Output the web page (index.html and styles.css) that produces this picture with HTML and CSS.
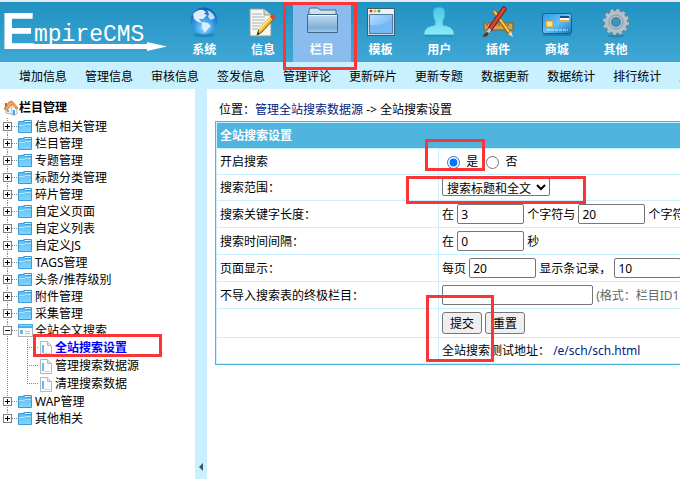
FILE: index.html
```html
<!DOCTYPE html>
<html lang="zh-CN">
<head>
<meta charset="utf-8">
<title>EmpireCMS</title>
<link rel="stylesheet" href="styles.css">
</head>
<body>
<svg class="defs" aria-hidden="true">
  <defs>
    <linearGradient id="gFolder" x1="0" y1="0" x2="0" y2="1"><stop offset="0" stop-color="#5cbcf0"/><stop offset="1" stop-color="#7ed6ff"/></linearGradient>
    <linearGradient id="gBig" x1="0" y1="0" x2="0" y2="1"><stop offset="0" stop-color="#c3dcf2"/><stop offset=".75" stop-color="#80aed8"/><stop offset="1" stop-color="#a8cdee"/></linearGradient>
    <radialGradient id="gGlobe" cx=".5" cy=".75" r=".7"><stop offset="0" stop-color="#8fdcff"/><stop offset=".5" stop-color="#3d9be8"/><stop offset="1" stop-color="#1560b4"/></radialGradient>
    <linearGradient id="gUser" x1="0" y1="0" x2="0" y2="1"><stop offset="0" stop-color="#48c4e4"/><stop offset="1" stop-color="#90ecf8"/></linearGradient>
    <linearGradient id="gWin" x1="0" y1="0" x2="1" y2="1"><stop offset="0" stop-color="#b8dcff"/><stop offset=".5" stop-color="#8cc4fa"/><stop offset="1" stop-color="#5aa4f0"/></linearGradient>
    <linearGradient id="gCard" x1="0" y1="0" x2="1" y2="1"><stop offset="0" stop-color="#2c98e4"/><stop offset=".5" stop-color="#66c0f4"/><stop offset="1" stop-color="#1674c4"/></linearGradient>
  </defs>
  <symbol id="node" viewBox="0 0 18 17">
    <path d="M7.500 0V17" stroke="#888" stroke-dasharray="1 1"/><path d="M12 8.500H18" stroke="#888" stroke-dasharray="1 1"/>
    <rect x="3.500" y="4.500" width="8" height="8" fill="#fff" stroke="#808080"/><path d="M5 8.500H10M7.500 6V11" stroke="#000"/>
  </symbol>
  <symbol id="node-open" viewBox="0 0 18 17">
    <path d="M7.500 0V17" stroke="#888" stroke-dasharray="1 1"/><path d="M12 8.500H18" stroke="#888" stroke-dasharray="1 1"/>
    <rect x="3.500" y="4.500" width="8" height="8" fill="#fff" stroke="#808080"/><path d="M5 8.500H10" stroke="#000"/>
  </symbol>
  <symbol id="node-last" viewBox="0 0 18 17">
    <path d="M7.500 0V8" stroke="#888" stroke-dasharray="1 1"/><path d="M12 8.500H18" stroke="#888" stroke-dasharray="1 1"/>
    <rect x="3.500" y="4.500" width="8" height="8" fill="#fff" stroke="#808080"/><path d="M5 8.500H10M7.500 6V11" stroke="#000"/>
  </symbol>
  <symbol id="branch" viewBox="0 0 39 18">
    <path d="M7.500 0V18M27.500 0V18M29 8.500H39" stroke="#888" stroke-dasharray="1 1"/>
  </symbol>
  <symbol id="branch-last" viewBox="0 0 39 18">
    <path d="M7.500 0V18M27.500 0V9M29 8.500H39" stroke="#888" stroke-dasharray="1 1"/>
  </symbol>
  <symbol id="folder" viewBox="0 0 15 13">
    <path d="M5.500 .5H13.500V3" fill="#c4ecff" stroke="#3898d4"/>
    <path d="M.5 12.500V1.500H6L7.500 2.500H13.500V12.500Z" fill="url(#gFolder)" stroke="#3a9cd8"/>
    <path d="M1 5.500H6L7.500 4.500H13" fill="none" stroke="#b0e4ff"/>
  </symbol>
  <symbol id="panel" viewBox="0 0 15 13">
    <rect x=".5" y=".5" width="14" height="12" fill="#f6fafc" stroke="#a8b4ba"/><path d="M0 0H15V4H0Z" fill="#46b0e8"/><path d="M1 1.500H14" stroke="#8cd4f8"/>
    <path d="M2 6H5V10H2Z" fill="#68b8e6"/><path d="M7 7.500H12M7 9.500H12" stroke="#b8c4ca"/>
  </symbol>
  <symbol id="page" viewBox="0 0 12 15">
    <path d="M.5 .5H7.500L11.500 4.500V14.500H.5Z" fill="#fbfcfd" stroke="#b0b8be"/><path d="M7.500 .5V4.500H11.500" fill="#dde4e8" stroke="#b0b8be"/><path d="M2 4H4V12H2Z" fill="#6cbae6"/><path d="M4 12.500H10" stroke="#c8d8e0"/>
  </symbol>
</svg>

<div class="page">
  <header class="top">
    <a class="logo" href="#" aria-label="EmpireCMS">
      <span class="logo-e">E</span><span class="logo-rest">mpireCMS</span>
      <svg class="logo-arrow" viewBox="0 0 162 9" aria-hidden="true"><path d="M0 2H142V0L162 4.500 142 9V7H0Z" fill="#fff"/></svg>
    </a>
    <nav class="mainnav">
      <a href="#"><svg viewBox="0 0 32 32"><ellipse cx="16" cy="29" rx="10" ry="2" fill="#176c9c" opacity=".5"/><circle cx="16" cy="15" r="13.500" fill="url(#gGlobe)"/><path d="M5 8Q10 3 15 4L18 6 16 8 19 9 15 13 11 13 14 17 10 16 6 13Z" fill="#eef8ff" opacity=".9"/><path d="M19 4Q25 6 27 12L23 14 20 11 21 8Z" fill="#d4efff" opacity=".85"/><path d="M14 16L20 17 23 20 19 24 17 27 14 22Z" fill="#e4f6ff" opacity=".9"/></svg>系统</a>
      <a href="#"><svg viewBox="0 0 32 32"><path d="M3 3H17L24 9V30H3Z" fill="#f6f7f4" stroke="#929894"/><path d="M17 3V9H24" fill="#d7dad7" stroke="#929894"/><path d="M5 8H15M5 11H18M5 14H18M5 17H16M5 20H13M5 23H11" stroke="#a9b1b5"/><path d="M10 29L12 23 24 10 27 13 15 26Z" fill="#f4b42c" stroke="#6b5318"/><path d="M12 24L24 11" stroke="#ffe370" stroke-width="2"/><path d="M23 11L26 14 29 11 26 8Z" fill="#df4335"/><path d="M10 29L11 26 13 28Z" fill="#222"/></svg>信息</a>
      <a class="active" href="#"><svg class="wide" viewBox="0 0 34 32"><path d="M4 8V4Q4 2 6 2H13L15 4H31V9" fill="#d0e2f2" stroke="#476886"/><path d="M2.500 8.500H32.500V26.500H2.500Z" fill="url(#gBig)" stroke="#416688"/><path d="M3 9.500H32" stroke="#e9f5ff"/></svg>栏目</a>
      <a href="#"><svg viewBox="0 0 32 32"><path d="M2.500 2.500H29.500V29.500H2.500Z" fill="#cbd9e3" stroke="#405d73"/><path d="M3 3H29V8H3Z" fill="#edf2f5"/><circle cx="6" cy="5" r="1.500" fill="#e63425"/><circle cx="10" cy="5" r="1.500" fill="#eab51e"/><circle cx="14" cy="5" r="1.500" fill="#40aa35"/><path d="M4.500 8.500H27.500V27.500H4.500Z" fill="url(#gWin)" stroke="#4d7ea5"/><path d="M5 19Q15 20 27 14V27H5Z" fill="#75b8f6"/></svg>模板</a>
      <a href="#"><svg viewBox="0 0 32 32"><path d="M1 29V26Q3 20 12 19V15Q10 12 10 7Q10 1 16 1T22 7Q22 12 20 15V19Q29 20 31 26V29Z" fill="url(#gUser)" stroke="#2fa9c9"/><path d="M2 30H30" stroke="#1c7095" opacity=".6"/></svg>用户</a>
      <a href="#"><svg viewBox="0 0 32 32"><path d="M2 17H31V24H2Z" fill="#d3a256" stroke="#875b20"/><path d="M5 18V20M8 18V20M11 18V20M14 18V20M17 18V20M20 18V20M23 18V20M26 18V20" stroke="#6c4818"/><path d="M12 5L28 28" stroke="#a46a12" stroke-width="4"/><path d="M12 5L27 26" stroke="#f6cf48" stroke-width="2"/><path d="M26 28L31 31 29 25Z" fill="#f0dbb8"/><path d="M22 3L8 23" stroke="#7f1e18" stroke-width="5" stroke-linecap="round"/><path d="M22 3L8 23" stroke="#d84438" stroke-width="3" stroke-linecap="round"/><path d="M8 23L5 28" stroke="#c8cbd0" stroke-width="3"/><path d="M5 26Q1 28 1 31Q6 31 7 27Z" fill="#5a351c"/></svg>插件</a>
      <a href="#"><svg viewBox="0 0 32 32"><rect x="1.500" y="7.500" width="29" height="20" rx="2" fill="url(#gCard)" stroke="#135e9e"/><path d="M2 29H30" stroke="#17618f"/><rect x="5" y="15" width="7" height="6" fill="#f8e293" stroke="#d7941b"/><path d="M19 10H28V12H19Z" fill="#17499c"/><path d="M19 12H28V14H19Z" fill="#fff"/><path d="M19 14H28V16H19Z" fill="#eab532"/><path d="M6 24H27" stroke="#e4f7ff" stroke-dasharray="3 1"/></svg>商城</a>
      <a href="#"><svg viewBox="0 0 32 32"><ellipse cx="16" cy="30" rx="9" ry="1.500" fill="#176c9c" opacity=".5"/><circle cx="16" cy="16" r="11" fill="none" stroke="#66798a" stroke-width="5" stroke-dasharray="3.760 2"/><circle cx="16" cy="16" r="11" fill="none" stroke="#b4c0ca" stroke-width="4" stroke-dasharray="3 2.760"/><circle cx="16" cy="16" r="8" fill="none" stroke="#b4c0ca" stroke-width="6"/><circle cx="16" cy="16" r="7" fill="none" stroke="#8496a4"/><circle cx="16" cy="16" r="4" fill="#3497c6" stroke="#61788a"/></svg>其他</a>
    </nav>
  </header>

  <nav class="subnav">
    <a href="#">增加信息</a><a href="#">管理信息</a><a href="#">审核信息</a><a href="#">签发信息</a><a href="#">管理评论</a><a href="#">更新碎片</a><a href="#">更新专题</a><a href="#">数据更新</a><a href="#">数据统计</a><a href="#">排行统计</a><a href="#">后台首页</a>
  </nav>

  <div class="body">
    <aside class="sidebar">
      <h2><svg viewBox="0 0 16 16"><path d="M3 8L7 4 12 9V15L3 13Z" fill="#e9f1f7" stroke="#a9bcca"/><path d="M8 3L14 9V14L9 15V9Z" fill="#fbfdff" stroke="#a9bcca"/><path d="M1 9L6 2 9 1 15 8 13 9 9 4 4 10Z" fill="#f4a850" stroke="#d88038"/><path d="M2 3H4V6L2 8Z" fill="#b96443"/><path d="M10 10H12V15H10Z" fill="#56a0d8"/><path d="M4 10H6V12H4Z" fill="#6eaee0"/></svg>栏目管理</h2>
      <ul class="tree">
        <li><svg class="node"><use href="#node"/></svg><svg class="folder"><use href="#folder"/></svg><a href="#">信息相关管理</a></li>
        <li><svg class="node"><use href="#node"/></svg><svg class="folder"><use href="#folder"/></svg><a href="#">栏目管理</a></li>
        <li><svg class="node"><use href="#node"/></svg><svg class="folder"><use href="#folder"/></svg><a href="#">专题管理</a></li>
        <li><svg class="node"><use href="#node"/></svg><svg class="folder"><use href="#folder"/></svg><a href="#">标题分类管理</a></li>
        <li><svg class="node"><use href="#node"/></svg><svg class="folder"><use href="#folder"/></svg><a href="#">碎片管理</a></li>
        <li><svg class="node"><use href="#node"/></svg><svg class="folder"><use href="#folder"/></svg><a href="#">自定义页面</a></li>
        <li><svg class="node"><use href="#node"/></svg><svg class="folder"><use href="#folder"/></svg><a href="#">自定义列表</a></li>
        <li><svg class="node"><use href="#node"/></svg><svg class="folder"><use href="#folder"/></svg><a href="#">自定义JS</a></li>
        <li><svg class="node"><use href="#node"/></svg><svg class="folder"><use href="#folder"/></svg><a href="#">TAGS管理</a></li>
        <li><svg class="node"><use href="#node"/></svg><svg class="folder"><use href="#folder"/></svg><a href="#">头条/推荐级别</a></li>
        <li><svg class="node"><use href="#node"/></svg><svg class="folder"><use href="#folder"/></svg><a href="#">附件管理</a></li>
        <li><svg class="node"><use href="#node"/></svg><svg class="folder"><use href="#folder"/></svg><a href="#">采集管理</a></li>
        <li><svg class="node"><use href="#node-open"/></svg><svg class="folder"><use href="#panel"/></svg><a href="#">全站全文搜索</a>
          <ul class="children">
            <li><svg class="branch"><use href="#branch"/></svg><svg class="leaf"><use href="#page"/></svg><a class="current" href="#">全站搜索设置</a></li>
            <li><svg class="branch"><use href="#branch"/></svg><svg class="leaf"><use href="#page"/></svg><a href="#">管理搜索数据源</a></li>
            <li><svg class="branch"><use href="#branch-last"/></svg><svg class="leaf"><use href="#page"/></svg><a href="#">清理搜索数据</a></li>
          </ul>
        </li>
        <li><svg class="node"><use href="#node"/></svg><svg class="folder"><use href="#folder"/></svg><a href="#">WAP管理</a></li>
        <li><svg class="node"><use href="#node-last"/></svg><svg class="folder"><use href="#folder"/></svg><a href="#">其他相关</a></li>
      </ul>
    </aside>

    <button class="splitter" type="button" aria-label="收起菜单"><svg viewBox="0 0 4 8"><path d="M4 0V8L0 4Z" fill="#456"/></svg></button>

    <main class="main">
      <p class="crumbs">位置：<a href="#">管理全站搜索数据源</a> -&gt; 全站搜索设置</p>
      <form>
        <table class="settings">
          <thead><tr><th colspan="2">全站搜索设置</th></tr></thead>
          <tbody>
            <tr><td>开启搜索</td><td><input type="radio" name="open" id="yes" checked> <label for="yes">是</label> <input type="radio" name="open" id="no"> <label for="no">否</label></td></tr>
            <tr><td><label for="scope">搜索范围：</label></td><td><select id="scope"><option>搜索标题和全文</option></select></td></tr>
            <tr class="tall"><td><label for="minlen">搜索关键字长度：</label></td><td>在 <input type="text" class="short" id="minlen" value="3"> <label for="maxlen">个字符与</label> <input type="text" class="short" id="maxlen" value="20"> 个字符之间</td></tr>
            <tr class="tall"><td><label for="gap">搜索时间间隔：</label></td><td>在 <input type="text" class="short" id="gap" value="0"> 秒</td></tr>
            <tr class="tall"><td><label for="rows">页面显示：</label></td><td>每页 <input type="text" class="short" id="rows" value="20"> <label for="links">显示条记录，</label> <input type="text" class="short" id="links" value="10"></td></tr>
            <tr class="tall"><td><label for="skip">不导入搜索表的终极栏目：</label></td><td><input type="text" class="long" id="skip"> <span class="hint">(格式：栏目ID1,栏目ID2)</span></td></tr>
            <tr class="actions"><td></td><td><button type="submit">提交</button> <button type="reset">重置</button></td></tr>
            <tr><td></td><td>全站搜索测试地址： <a href="#">/e/sch/sch.html</a></td></tr>
          </tbody>
        </table>
      </form>
    </main>
  </div>

  <div class="mark mark-nav"></div>
  <div class="mark mark-tree"></div>
  <div class="mark mark-radio"></div>
  <div class="mark mark-scope"></div>
  <div class="mark mark-submit"></div>
</div>
</body>
</html>
```
FILE: styles.css
```css
* { box-sizing: border-box; }

body {
  margin: 0;
  overflow: hidden;
  background: #fff;
  color: #000;
  font: 12px/17px "Noto Sans", "Noto Sans CJK SC", sans-serif;
  white-space: nowrap;
}

a { color: inherit; text-decoration: none; }
svg { display: block; flex: none; }
.defs { position: absolute; width: 0; height: 0; }

.page {
  position: relative;
  display: flex;
  flex-direction: column;
  min-height: 100vh;
  overflow: hidden;
}

/* Header */
.top {
  display: flex;
  height: 62px;
  border-top: 2px solid #e4eaed;
  background: linear-gradient(#2192c2, #40a7d5);
  color: #fff;
}

.logo {
  position: relative;
  display: flex;
  flex: none;
  align-items: flex-start;
  width: 175px;
  padding-left: 1px;
}
.logo-e { width: 33px; font: bold 52px/58px "Liberation Sans", sans-serif; }
.logo-rest { font: 23px/66px "Liberation Mono", monospace; }
.logo-arrow { position: absolute; left: 5px; top: 40px; width: 162px; height: 9px; }

.mainnav { display: flex; width: 470px; }
.mainnav a {
  display: flex;
  flex: 1;
  flex-direction: column;
  align-items: center;
  margin-top: 2px;
  font-weight: bold;
}
.mainnav .active { background: #8bbcee; }
.mainnav svg { width: 32px; height: 32px; margin: 2px 0 3px; }
.mainnav .wide { width: 34px; }

.subnav {
  display: flex;
  gap: 18px;
  padding: 6px 19px 4px;
  background: #c8f0ff;
}
.subnav a { flex: none; }

/* Columns */
.body {
  display: grid;
  flex: 1;
  grid-template-columns: 195px 12px minmax(0, 1fr);
}

.sidebar { padding-top: 9px; }
.sidebar h2 {
  display: flex;
  align-items: center;
  margin: 0;
  padding-left: 3px;
  font-size: 12px;
  line-height: 20px;
}
.sidebar h2 svg { width: 16px; height: 16px; }

.tree, .children { margin: 0; padding: 0; list-style: none; }
.tree li { display: flex; flex-wrap: wrap; align-items: center; }
.node { width: 18px; height: 17px; }
.folder { width: 15px; height: 13px; margin-right: 2px; }
.children { width: 100%; line-height: 18px; }
.branch { width: 39px; height: 18px; }
.leaf { width: 12px; height: 15px; margin: 0 3px 0 1px; }
.current { color: #00f; font-weight: bold; }

.splitter {
  display: flex;
  align-items: flex-end;
  padding: 0 4px 8px;
  border: 0;
  background: #c8f0ff;
}
.splitter svg { width: 4px; height: 8px; }

/* Settings form */
.main { padding: 12px 8px; }
.crumbs { margin: 0 0 3px 4px; }
.main a { color: #002280; }

.settings {
  min-width: 100%;
  border: 1px solid #4fb4de;
  border-spacing: 1px;
  background: #c8f0ff;
}
.settings th {
  height: 25px;
  padding: 0 3px;
  background: #4fb4de;
  color: #fff;
  text-align: left;
}
.settings td { height: 25px; padding: 0 3px; background: #fff; }
.settings td:first-child { min-width: 221px; }
.settings .tall td { height: 26px; }
.settings .actions td { height: 28px; }

input, select, button { font: inherit; }
.settings input[type="radio"] {
  width: 13px;
  height: 13px;
  margin: 0 3px 0 5px;
  vertical-align: middle;
}
input[type="text"] {
  height: 20px;
  padding: 0 3px;
  border: 1px solid #767676;
  border-radius: 2px;
}
.short { width: 67px; }
.long { width: 151px; }
select {
  width: 108px;
  height: 18px;
  padding: 0;
  border: 1px solid #767676;
  border-radius: 2px;
  background: #fff;
  color: #000;
}
.settings button {
  width: 40px;
  height: 22px;
  padding: 0;
  border: 1px solid #767676;
  border-radius: 3px;
  background: #efefef;
  color: #000;
}
.hint { color: #666; }

/* Highlight boxes laid over the screen */
.mark { position: absolute; border: 3px solid #fc3436; pointer-events: none; }
.mark-nav { left: 283px; top: 2px; width: 74px; height: 68px; }
.mark-tree { left: 33px; top: 334px; width: 129px; height: 23px; }
.mark-radio { left: 425px; top: 139px; width: 60px; height: 32px; }
.mark-scope { left: 406px; top: 176px; width: 180px; height: 28px; }
.mark-submit { left: 426px; top: 295px; width: 68px; height: 67px; }
```
